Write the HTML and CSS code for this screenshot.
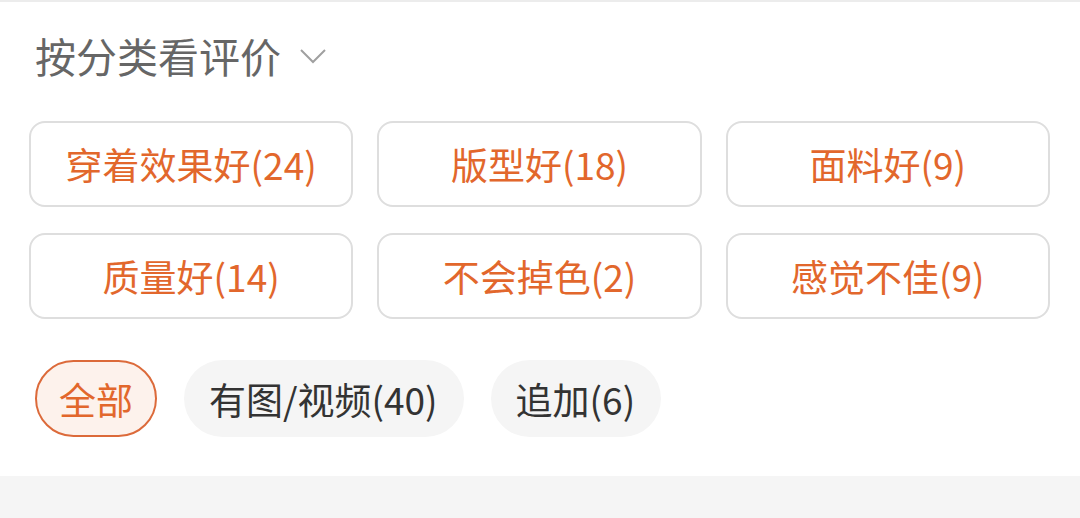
FILE: index.html
```html
<!DOCTYPE html>
<html lang="zh-CN">
<head>
  <meta charset="UTF-8" />
  <title>按分类看评价</title>
  <link rel="stylesheet" href="styles.css">
</head>
<body>
  <div class="review-filter">
    <div class="filter-title">
      按分类看评价
      <svg class="chevron" width="28" height="16" viewBox="0 0 28 16">
        <polyline points="2,2 14,14 26,2" fill="none" stroke="#a0a0a0" stroke-width="2" />
      </svg>
    </div>

    <div class="tag-grid">
      <div class="tag">穿着效果好(24)</div>
      <div class="tag">版型好(18)</div>
      <div class="tag">面料好(9)</div>
      <div class="tag">质量好(14)</div>
      <div class="tag">不会掉色(2)</div>
      <div class="tag">感觉不佳(9)</div>
    </div>

    <div class="pill-row">
      <div class="pill active">全部</div>
      <div class="pill">有图/视频(40)</div>
      <div class="pill">追加(6)</div>
    </div>
  </div>
  <div class="footer-band"></div>
</body>
</html>
```

FILE: styles.css
```css
body {
  margin: 0;
  background: #fff;
  font-family: "Noto Sans CJK SC", "Noto Sans", sans-serif;
}

.review-filter {
  border-top: 2px solid #ececec;
  height: 476px;
  box-sizing: border-box;
}

.filter-title {
  display: flex;
  align-items: center;
  gap: 18px;
  padding: 24px 0 0 35px;
  font-size: 41px;
  line-height: 58px;
  color: #666;
}

.chevron {
  margin-top: 2px;
}

.tag-grid {
  display: grid;
  grid-template-columns: repeat(3, 1fr);
  column-gap: 24px;
  row-gap: 26px;
  padding: 0 30px 0 29px;
  margin-top: 37px;
}

.tag {
  height: 86px;
  box-sizing: border-box;
  border: 2px solid #dedede;
  border-radius: 16px;
  display: flex;
  align-items: center;
  justify-content: center;
  color: #e2672c;
  font-size: 37px;
}

.pill-row {
  display: flex;
  gap: 27px;
  padding-left: 35px;
  margin-top: 41px;
}

.pill {
  height: 77px;
  box-sizing: border-box;
  padding: 0 26px 0 25px;
  border-radius: 40px;
  background: #f5f5f5;
  color: #333;
  font-size: 37px;
  display: flex;
  align-items: center;
}

.pill.active {
  background: #fdf2ec;
  border: 2px solid #dc6a3a;
  color: #e2672c;
  padding: 0 22px;
}

.footer-band {
  height: 42px;
  background: #f5f5f5;
}
```
